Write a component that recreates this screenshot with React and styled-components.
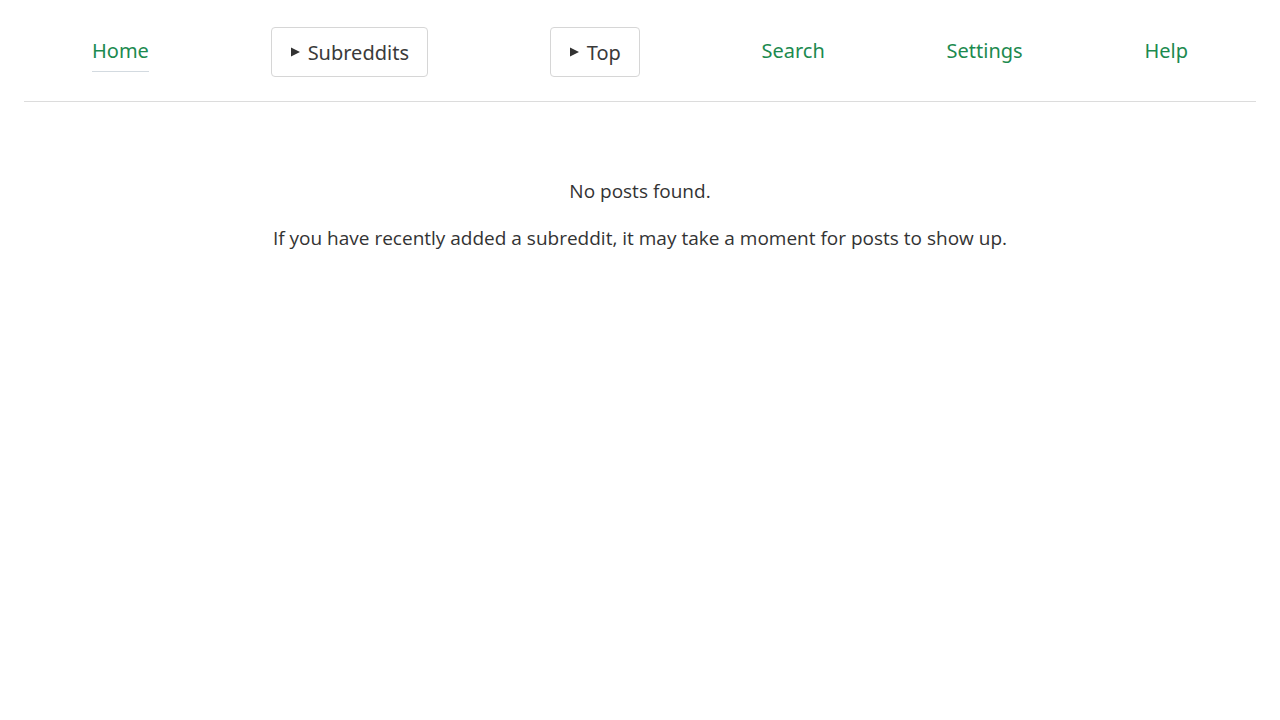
import styled, { createGlobalStyle } from "styled-components";

const GlobalStyle = createGlobalStyle`
  html, body {
    margin: 0;
    padding: 0;
    background: #fff;
  }
  body {
    font-family: "Open Sans", "Noto Sans", sans-serif;
    color: #333;
  }
`;

const Page = styled.div`
  padding: 0 24px;
`;

const Nav = styled.nav`
  display: flex;
  align-items: center;
  justify-content: space-between;
  height: 102px;
  padding: 3px 68px 0;
  border-bottom: 1px solid #dcdcdc;
  box-sizing: border-box;
  font-family: "Noto Sans", "Open Sans", sans-serif;
  font-size: 20px;
`;

const NavLink = styled.a`
  color: #1c8a4f;
  text-decoration: none;
  line-height: 24px;
  margin-top: 7px;
  padding-bottom: 8px;
  border-bottom: 1px solid ${(p) => (p.$active ? "#d3dae0" : "transparent")};
`;

const Dropdown = styled.button`
  display: flex;
  align-items: center;
  gap: 8px;
  height: 50px;
  padding: 0 18px 0 19px;
  background: #fff;
  border: 1px solid #d6d6d6;
  border-radius: 4px;
  color: #3a3a3a;
  font: inherit;
  cursor: pointer;
`;

const Marker = styled.svg`
  width: 9px;
  height: 10px;
  fill: #333;
`;

const Empty = styled.main`
  text-align: center;
  font-size: 19px;
  color: #333;
  padding-top: 76px;
`;

const Line = styled.p`
  margin: 0 0 21px;
  line-height: 26px;
`;

function Caret() {
  return (
    <Marker viewBox="0 0 9 10">
      <path d="M0 0.5 L9 5 L0 9.5 Z" />
    </Marker>
  );
}

export default function App() {
  return (
    <>
      <GlobalStyle />
      <Page>
        <Nav>
          <NavLink $active href="#">Home</NavLink>
          <Dropdown>
            <Caret />
            Subreddits
          </Dropdown>
          <Dropdown>
            <Caret />
            Top
          </Dropdown>
          <NavLink href="#">Search</NavLink>
          <NavLink href="#">Settings</NavLink>
          <NavLink href="#">Help</NavLink>
        </Nav>
        <Empty>
          <Line>No posts found.</Line>
          <Line>If you have recently added a subreddit, it may take a moment for posts to show up.</Line>
        </Empty>
      </Page>
    </>
  );
}
